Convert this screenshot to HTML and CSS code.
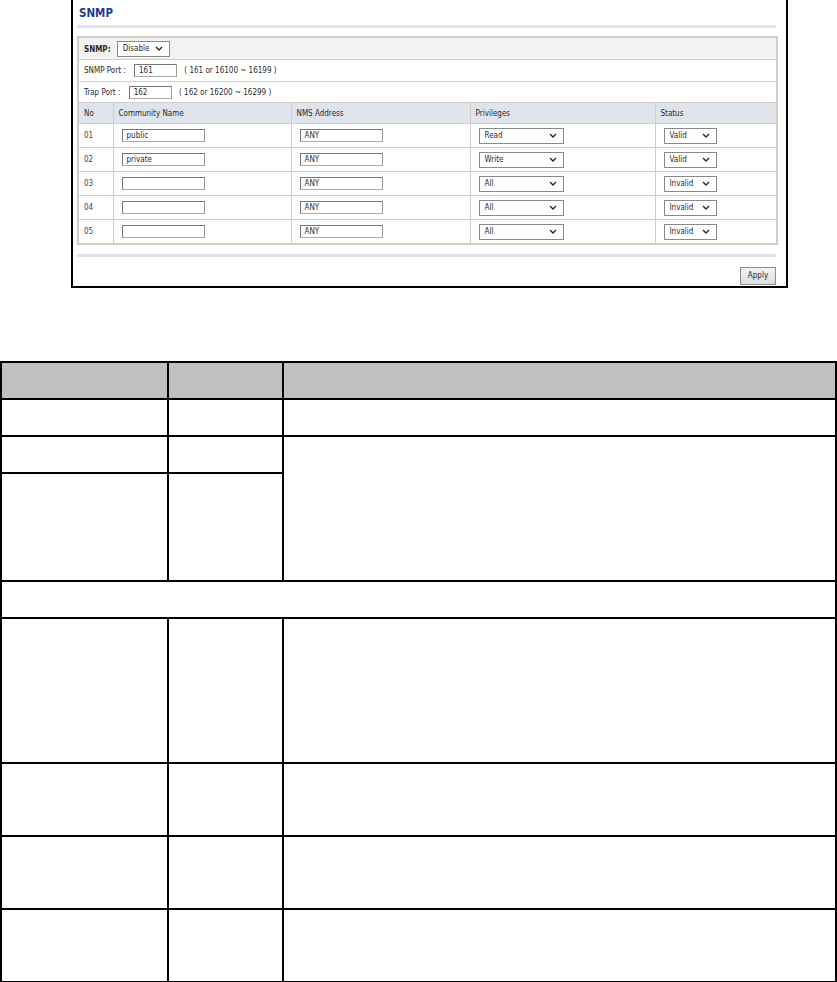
FILE: index.html
```html
<!DOCTYPE html>
<html lang="en">
<head>
<meta charset="UTF-8">
<title>SNMP</title>
<link rel="stylesheet" href="styles.css">
</head>
<body>

<div class="shot">
<div class="title">SNMP</div>
<div class="title-line"></div>

<table class="form">
<colgroup>
<col style="width:35px"><col style="width:178px"><col style="width:179px"><col style="width:185px"><col style="width:122px">
</colgroup>
<tr class="top">
<td colspan="5"><b>SNMP:</b> <span class="sel sel-mode">Disable <svg width="8" height="5" viewBox="0 0 8 5"><path d="M1 1 L4 4 L7 1" fill="none" stroke="#222" stroke-width="1.3"/></svg></span></td>
</tr>
<tr class="port port-first">
<td colspan="5">SNMP Port : <span class="inp inp-port">161</span> <span class="hint">( 161 or 16100 ~ 16199 )</span></td>
</tr>
<tr class="port">
<td colspan="5">Trap Port : <span class="inp inp-port">162</span> <span class="hint">( 162 or 16200 ~ 16299 )</span></td>
</tr>
<tr class="head">
<td>No</td><td>Community Name</td><td>NMS Address</td><td>Privileges</td><td>Status</td>
</tr>
<tr class="row">
<td class="no">01</td>
<td><span class="inp inp-wide">public</span></td>
<td><span class="inp inp-wide">ANY</span></td>
<td><span class="sel sel-priv">Read <svg width="8" height="5" viewBox="0 0 8 5"><path d="M1 1 L4 4 L7 1" fill="none" stroke="#222" stroke-width="1.3"/></svg></span></td>
<td><span class="sel sel-status">Valid <svg width="8" height="5" viewBox="0 0 8 5"><path d="M1 1 L4 4 L7 1" fill="none" stroke="#222" stroke-width="1.3"/></svg></span></td>
</tr>
<tr class="row">
<td class="no">02</td>
<td><span class="inp inp-wide">private</span></td>
<td><span class="inp inp-wide">ANY</span></td>
<td><span class="sel sel-priv">Write <svg width="8" height="5" viewBox="0 0 8 5"><path d="M1 1 L4 4 L7 1" fill="none" stroke="#222" stroke-width="1.3"/></svg></span></td>
<td><span class="sel sel-status">Valid <svg width="8" height="5" viewBox="0 0 8 5"><path d="M1 1 L4 4 L7 1" fill="none" stroke="#222" stroke-width="1.3"/></svg></span></td>
</tr>
<tr class="row">
<td class="no">03</td>
<td><span class="inp inp-wide"></span></td>
<td><span class="inp inp-wide">ANY</span></td>
<td><span class="sel sel-priv">All <svg width="8" height="5" viewBox="0 0 8 5"><path d="M1 1 L4 4 L7 1" fill="none" stroke="#222" stroke-width="1.3"/></svg></span></td>
<td><span class="sel sel-status">Invalid <svg width="8" height="5" viewBox="0 0 8 5"><path d="M1 1 L4 4 L7 1" fill="none" stroke="#222" stroke-width="1.3"/></svg></span></td>
</tr>
<tr class="row">
<td class="no">04</td>
<td><span class="inp inp-wide"></span></td>
<td><span class="inp inp-wide">ANY</span></td>
<td><span class="sel sel-priv">All <svg width="8" height="5" viewBox="0 0 8 5"><path d="M1 1 L4 4 L7 1" fill="none" stroke="#222" stroke-width="1.3"/></svg></span></td>
<td><span class="sel sel-status">Invalid <svg width="8" height="5" viewBox="0 0 8 5"><path d="M1 1 L4 4 L7 1" fill="none" stroke="#222" stroke-width="1.3"/></svg></span></td>
</tr>
<tr class="row">
<td class="no">05</td>
<td><span class="inp inp-wide"></span></td>
<td><span class="inp inp-wide">ANY</span></td>
<td><span class="sel sel-priv">All <svg width="8" height="5" viewBox="0 0 8 5"><path d="M1 1 L4 4 L7 1" fill="none" stroke="#222" stroke-width="1.3"/></svg></span></td>
<td><span class="sel sel-status">Invalid <svg width="8" height="5" viewBox="0 0 8 5"><path d="M1 1 L4 4 L7 1" fill="none" stroke="#222" stroke-width="1.3"/></svg></span></td>
</tr>
</table>

<div class="foot-line"></div>
<div class="actions"><span class="btn">Apply</span></div>
</div>

<table class="doc">
<colgroup>
<col style="width:167px"><col style="width:115px"><col>
</colgroup>
<tr class="doc-head"><td></td><td></td><td></td></tr>
<tr class="h37"><td></td><td></td><td></td></tr>
<tr class="h37"><td></td><td></td><td rowspan="2"></td></tr>
<tr class="h108"><td></td><td></td></tr>
<tr class="h37"><td colspan="3"></td></tr>
<tr class="h145"><td></td><td></td><td></td></tr>
<tr class="h73"><td></td><td></td><td></td></tr>
<tr class="h73"><td></td><td></td><td></td></tr>
<tr class="h73"><td></td><td></td><td></td></tr>
</table>

</body>
</html>
```

FILE: styles.css
```css
body {
margin: 0;
padding: 0;
background: #fff;
font-family: "DejaVu Sans Condensed", "DejaVu Sans", sans-serif;
}

.shot {
margin-left: 71px;
width: 709px;
height: 286px;
border: 2px solid #000;
border-top: 0;
padding-left: 4px;
box-sizing: content-box;
}

.title {
color: #1d3d8b;
font-weight: bold;
font-size: 11.5px;
padding-top: 6px;
padding-left: 2px;
height: 14px;
}

.title-line {
margin-top: 5px;
width: 699px;
height: 3px;
background: #dfe5ee;
}

.form {
margin-top: 8px;
width: 699px;
border-collapse: collapse;
table-layout: fixed;
border: 2px solid #d2cec1;
font-size: 8px;
color: #2a2a2a;
}

.form td {
border: 1px solid #d2cec1;
padding: 0 0 0 5px;
white-space: nowrap;
}

.form .top td {
height: 21px;
background: #f3f3f3;
}

.form .port td {
height: 20px;
}

.form .port-first td {
height: 21px;
}

.form .head td {
height: 20px;
background: #dfe4ec;
}

.form .row td {
height: 23px;
}

.form .row td + td {
padding-left: 8px;
}

.form .no {
color: #4d4332;
}

.inp {
display: inline-block;
vertical-align: middle;
height: 11px;
line-height: 12px;
border: 1px solid #777;
border-right-color: #999;
border-bottom-color: #aaa;
background: #fff;
padding-left: 4px;
box-sizing: content-box;
}

.inp-port {
width: 37px;
margin-left: 6px;
}

.inp-wide {
width: 77px;
}

.hint {
margin-left: 5px;
}

.sel {
display: inline-flex;
align-items: center;
justify-content: space-between;
vertical-align: middle;
height: 14px;
border: 1px solid #8a8a8a;
background: #fff;
padding: 0 6px 0 5px;
box-sizing: content-box;
}

.sel-mode {
width: 40px;
margin-left: 4px;
}

.sel-priv {
width: 72px;
}

.sel-status {
width: 40px;
}

.foot-line {
margin-top: 9px;
width: 699px;
height: 3px;
background: #dfe5ee;
}

.actions {
width: 699px;
display: flex;
justify-content: flex-end;
margin-top: 10px;
}

.btn {
display: inline-block;
width: 34px;
height: 16px;
line-height: 16px;
text-align: center;
font-size: 8px;
color: #222;
border: 1px solid #8d8d8d;
background: linear-gradient(#f4f4f4, #dedede);
}

.doc {
margin-top: 73px;
width: 837px;
border-collapse: collapse;
table-layout: fixed;
border: 2px solid #000;
}

.doc td {
border: 2px solid #000;
padding: 0;
}

.doc-head td {
height: 35px;
background: #c0c0c0;
}

.h37 td {
height: 35px;
}

.h108 td {
height: 106px;
}

.h145 td {
height: 143px;
}

.h73 td {
height: 71px;
}
```
